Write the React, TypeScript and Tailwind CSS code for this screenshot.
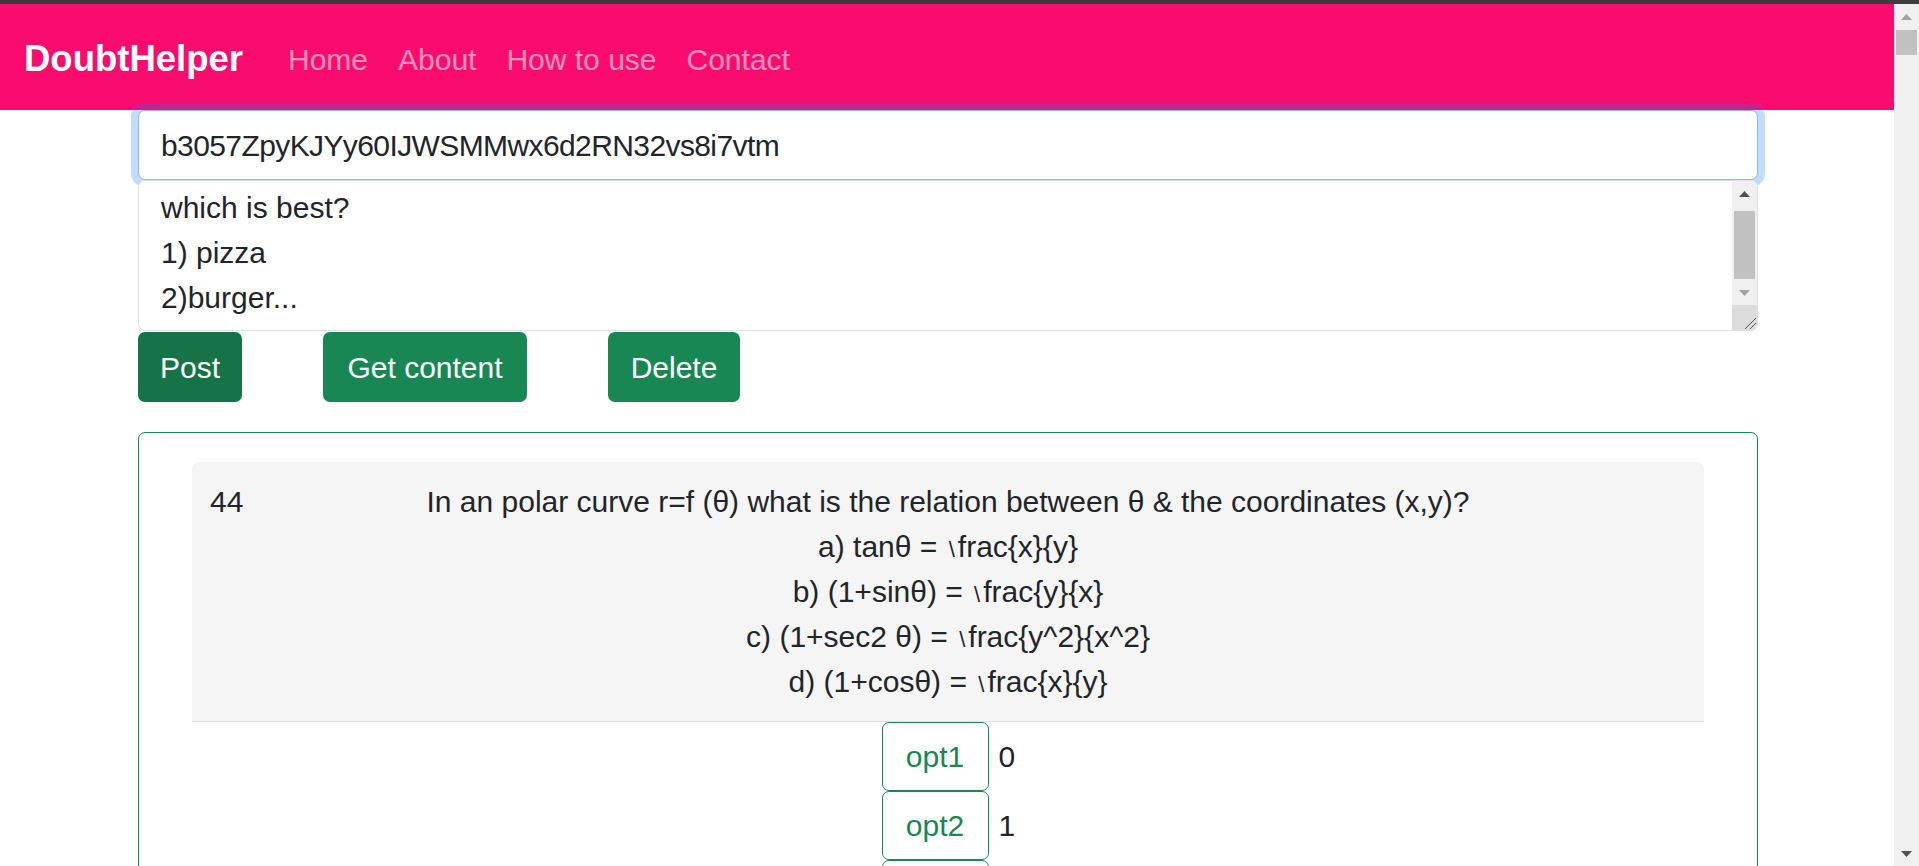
import { ReactNode } from 'react'

const font = "font-['Liberation_Sans','Noto_Sans',Arial,sans-serif]"

function UpArrow({ color }: { color: string }) {
  return (
    <svg width="11" height="6" viewBox="0 0 11 6">
      <polygon points="0,6 5.5,0 11,6" fill={color} />
    </svg>
  )
}

function DownArrow({ color }: { color: string }) {
  return (
    <svg width="11" height="6" viewBox="0 0 11 6">
      <polygon points="0,0 5.5,6 11,0" fill={color} />
    </svg>
  )
}

function Resizer() {
  return (
    <div className="h-[25px] w-[25px] bg-[#dcdcdc] flex items-end justify-end">
      <svg width="14" height="14" viewBox="0 0 14 14">
        <line x1="2" y1="13" x2="13" y2="2" stroke="#555" strokeWidth="1" />
        <line x1="7" y1="13" x2="13" y2="7" stroke="#555" strokeWidth="1" />
      </svg>
    </div>
  )
}

function NavLink({ children }: { children: ReactNode }) {
  return <a className="px-[15px] text-[30px] text-white/55 leading-[45px]">{children}</a>
}

// the \frac backslash shows up small and low in the original
function Frac({ pre, body }: { pre: string; body: string }) {
  return (
    <div className="h-[45px]">
      {pre} <span className="inline-block text-[22px] leading-none mx-[3px]">\</span>
      {body}
    </div>
  )
}

function OptRow({ label, count }: { label: string; count: number }) {
  return (
    <div className="flex items-center justify-center gap-[10px]">
      <button className="w-[107px] h-[69px] border border-[#198754] rounded-[7px] text-[#198754] text-[30px] bg-white">
        {label}
      </button>
      <span className="text-[30px] text-[#212529] w-[16px]">{count}</span>
    </div>
  )
}

export default function App() {
  const lines = [
    { pre: 'a) tanθ =', body: 'frac{x}{y}' },
    { pre: 'b) (1+sinθ) =', body: 'frac{y}{x}' },
    { pre: 'c) (1+sec2 θ) =', body: 'frac{y^2}{x^2}' },
    { pre: 'd) (1+cosθ) =', body: 'frac{x}{y}' },
  ]

  return (
    <div className={`h-[866px] w-[1919px] overflow-hidden flex flex-col bg-white text-[#212529] ${font}`}>
      <div className="h-[4px] bg-[#3c3c3c] shrink-0" />
      <div className="flex flex-1 min-h-0">
        <div className="flex-1 min-w-0 flex flex-col">
          {/* navbar */}
          <nav className="h-[106px] shrink-0 bg-[#fa0c6e] flex items-center pl-[24px] pt-[4px]">
            <span className="text-[36.5px] font-bold text-white mr-[30px] leading-[56px]">DoubtHelper</span>
            <NavLink>Home</NavLink>
            <NavLink>About</NavLink>
            <NavLink>How to use</NavLink>
            <NavLink>Contact</NavLink>
          </nav>

          <div className="ml-[138px] w-[1620px] flex flex-col">
            {/* id input */}
            <div className="relative z-10 h-[70px] border border-[#86b7fe] rounded-[7px] shadow-[0_0_0_7px_rgba(13,110,253,0.25)] bg-white flex items-center px-[22px] text-[30px] tracking-[-0.6px]">
              b3057ZpyKJYy60IJWSMMwx6d2RN32vs8i7vtm
            </div>

            {/* textarea */}
            <div className="relative z-20 h-[151px] border border-[#dee2e6] rounded-[7px] bg-white flex overflow-hidden">
              <div className="flex-1 px-[22px] pt-[4px] text-[30px] leading-[45px]">
                <div>which is best?</div>
                <div>1) pizza</div>
                <div>2)burger...</div>
              </div>
              <div className="w-[25px] bg-[#f0f0f0] flex flex-col">
                <div className="h-[25px] flex items-center justify-center">
                  <UpArrow color="#505050" />
                </div>
                <div className="flex-1 px-[2px]">
                  <div className="mt-[5px] h-[68px] bg-[#c1c1c1]" />
                </div>
                <div className="h-[25px] flex items-center justify-center">
                  <DownArrow color="#a3a3a3" />
                </div>
                <Resizer />
              </div>
            </div>

            {/* actions */}
            <div className="flex gap-[81px] mt-[1px]">
              <button className="w-[104px] h-[70px] rounded-[7px] bg-[#157347] text-white text-[30px]">Post</button>
              <button className="w-[204px] h-[70px] rounded-[7px] bg-[#198754] text-white text-[30px]">Get content</button>
              <button className="w-[132px] h-[70px] rounded-[7px] bg-[#198754] text-white text-[30px]">Delete</button>
            </div>

            {/* question card */}
            <div className="mt-[30px] border border-[#198754] rounded-[7px] px-[53px] pt-[29px] pb-[30px]">
              <div className="bg-[#f5f5f5] rounded-t-[7px] border-b border-[#dee2e6] grid grid-cols-[200px_1fr_200px] py-[17px] text-[30px] leading-[45px]">
                <div className="pl-[18px]">44</div>
                <div className="text-center">
                  <div>In an polar curve r=f (θ) what is the relation between θ &amp; the coordinates (x,y)?</div>
                  {lines.map((l) => (
                    <Frac key={l.pre} pre={l.pre} body={l.body} />
                  ))}
                </div>
                <div />
              </div>
              <div className="flex flex-col">
                <OptRow label="opt1" count={0} />
                <OptRow label="opt2" count={1} />
                <OptRow label="opt3" count={0} />
                <OptRow label="opt4" count={0} />
              </div>
            </div>
          </div>
        </div>

        {/* page scrollbar */}
        <div className="w-[25px] shrink-0 bg-[#f0f0f0] flex flex-col">
          <div className="h-[25px] flex items-center justify-center">
            <UpArrow color="#a3a3a3" />
          </div>
          <div className="flex-1 px-[2px]">
            <div className="mt-[1px] h-[25px] bg-[#c1c1c1]" />
          </div>
          <div className="h-[25px] flex items-center justify-center">
            <DownArrow color="#505050" />
          </div>
        </div>
      </div>
    </div>
  )
}
